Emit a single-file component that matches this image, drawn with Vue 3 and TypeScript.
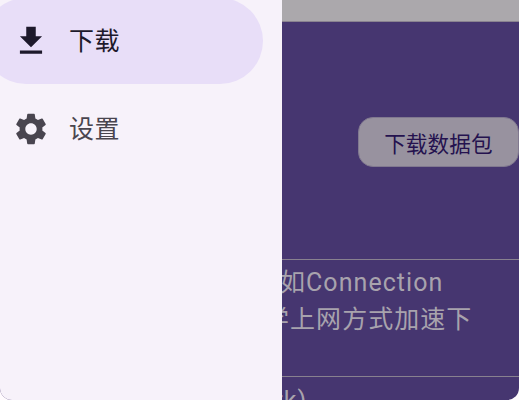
<script setup lang="ts">
const items = [
  { label: '下载', active: true, d: 'M19 9h-4V3H9v6H5l7 7 7-7zM5 18v2h14v-2H5z' },
  {
    label: '设置',
    active: false,
    d: 'M19.14 12.94c.04-.3.06-.61.06-.94 0-.32-.02-.64-.07-.94l2.03-1.58a.49.49 0 0 0 .12-.61l-1.92-3.32a.488.488 0 0 0-.59-.22l-2.39.96c-.5-.38-1.03-.7-1.62-.94l-.36-2.54a.484.484 0 0 0-.48-.41h-3.84c-.24 0-.43.17-.47.41l-.36 2.54c-.59.24-1.13.57-1.62.94l-2.39-.96c-.22-.08-.47 0-.59.22L2.74 8.87c-.12.21-.08.47.12.61l2.03 1.58c-.05.3-.09.63-.09.94s.02.64.07.94l-2.03 1.58a.49.49 0 0 0-.12.61l1.92 3.32c.12.22.37.29.59.22l2.39-.96c.5.38 1.03.7 1.62.94l.36 2.54c.05.24.24.41.48.41h3.84c.24 0 .44-.17.47-.41l.36-2.54c.59-.24 1.13-.56 1.62-.94l2.39.96c.22.08.47 0 .59-.22l1.92-3.32c.12-.22.07-.47-.12-.61l-2.01-1.58zM12 15.6c-1.98 0-3.6-1.62-3.6-3.6s1.62-3.6 3.6-3.6 3.6 1.62 3.6 3.6-1.62 3.6-3.6 3.6z'
  }
]
</script>

<template>
  <div class="window">
    <main class="page">
      <div class="topbar"></div>
      <section class="action">
        <button class="download" type="button">下载数据包</button>
      </section>
      <section class="note">
        <p class="line first">如Connection</p>
        <p class="line second">学上网方式加速下</p>
      </section>
      <section class="tail">
        <p class="line third">(Network)</p>
      </section>
    </main>
    <nav class="drawer">
      <div v-for="item in items" :key="item.label" class="item" :class="{ active: item.active }">
        <svg class="icon" viewBox="0 0 24 24" aria-hidden="true"><path :d="item.d" /></svg>
        <span class="label">{{ item.label }}</span>
      </div>
    </nav>
  </div>
</template>

<style>
html, body { background: #fffbfe; }
</style>

<style scoped>
.window {
  position: relative;
  width: 519px;
  height: 400px;
  overflow: hidden;
  border-radius: 0 0 12px 12px;
  font-family: Roboto, "Noto Sans CJK SC", sans-serif;
}
.page {
  height: 100%;
  background: #463670;
  color: #a8a3ad;
  font-size: 25px;
  letter-spacing: 1.05px;
}
.topbar {
  height: 21px;
  background: #aba8ac;
  border-bottom: 1px solid #8a8390;
}
.action {
  height: 238px;
  padding-top: 95px;
  box-sizing: border-box;
  display: flex;
  justify-content: flex-end;
  border-bottom: 1px solid #88818f;
}
.download {
  width: 161px;
  height: 50px;
  padding: 0;
  border: 1.5px solid #817990;
  border-radius: 15px;
  background: #98929f;
  color: #25124f;
  font: inherit;
  font-size: 21.6px;
  letter-spacing: 0.15px;
}
.note {
  height: 117px;
  box-sizing: border-box;
  padding-top: 4px;
  border-bottom: 1px solid #88818f;
}
.line {
  margin: 0;
  line-height: 37px;
  white-space: nowrap;
}
.first { padding-left: 280px; }
.second { padding-left: 264px; }
.third { padding-left: 187px; padding-top: 5px; }
.drawer {
  position: absolute;
  top: 0;
  left: 0;
  bottom: 0;
  width: 282px;
  display: flex;
  flex-direction: column;
  gap: 2px;
  background: #f7f2fa;
  overflow: hidden;
}
.item {
  flex: none;
  display: flex;
  align-items: center;
  gap: 19px;
  width: 263px;
  height: 86px;
  padding-left: 12px;
  box-sizing: border-box;
  color: #49454f;
  font-size: 25px;
  letter-spacing: 0.4px;
}
.item.active {
  margin-top: -2px;
  margin-left: -17px;
  width: 280px;
  padding-left: 29px;
  border-radius: 43px;
  background: #e8def8;
  color: #1d192b;
}
.icon {
  width: 38px;
  height: 38px;
  fill: currentColor;
  flex: none;
}
.label {
  position: relative;
  top: -2px;
}
</style>
